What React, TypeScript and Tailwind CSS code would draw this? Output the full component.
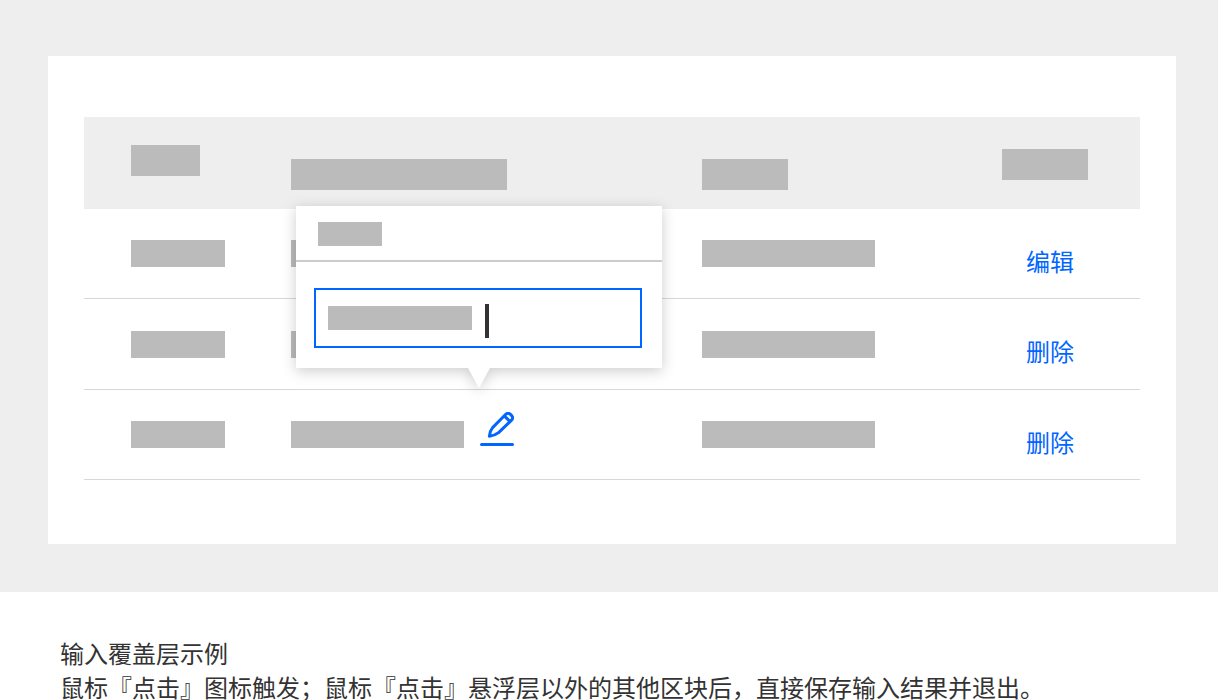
import type { ReactNode } from 'react';

function Bar({ className }: { className: string }) {
  return <div className={`shrink-0 bg-[#bbbbbb] ${className}`} />;
}

function ActionLink({ children }: { children: ReactNode }) {
  return (
    <a href="#" className="block pl-6 pt-[14px] text-2xl text-[#0066ff]">
      {children}
    </a>
  );
}

function EditPopover() {
  return (
    <div
      role="dialog"
      aria-label="输入覆盖层"
      className="absolute -left-[184px] bottom-full mb-11 w-[366px] drop-shadow-[0_3px_7px_rgba(0,0,0,0.2)]"
    >
      <div className="bg-white pb-5">
        <div className="border-b-2 border-[#cccccc] px-[22px] pb-[14px] pt-4">
          <Bar className="h-6 w-16" />
        </div>
        <div className="pl-[18px] pr-5 pt-[26px]">
          <label className="flex h-[60px] items-center border-2 border-[#0066ff] pl-3">
            <Bar className="h-6 w-36" />
            <span className="ml-[13px] mt-1.5 h-[34px] w-1 shrink-0 bg-[#333333]" />
            <input type="text" aria-label="输入内容" className="h-full min-w-0 flex-1 outline-none" />
          </label>
        </div>
      </div>
      <svg className="absolute left-1/2 top-full -ml-[11px]" width="22" height="20" viewBox="0 0 22 20" aria-hidden="true">
        <path d="M0 0H22L11 20Z" fill="#fff" />
      </svg>
    </div>
  );
}

function EditButton() {
  return (
    <div className="mb-3">
      <button type="button" aria-label="编辑" className="block text-[#0066ff]">
        <svg width="34" height="34" viewBox="0 0 34 34" fill="none" stroke="currentColor" aria-hidden="true">
          <path
            d="M9.4 24.2 C9.6 21.2 10.6 18 12.6 15.6 L25.8 2.3 Q28.2 .4 30.2 2.1 L31.7 3.6 Q33.5 5.8 31.6 8.1 L18.6 20.6 C16 22.6 12.8 23.8 9.4 24.2Z"
            strokeWidth="3"
            strokeLinejoin="round"
          />
          <path d="M24.2 3.8 30.2 9.6" strokeWidth="3" />
          <path d="M1.5 32.4H32.5" strokeWidth="3" strokeLinecap="round" />
        </svg>
      </button>
    </div>
  );
}

const rows = [
  { action: '编辑', height: 'h-[90px]' },
  { action: '删除', height: 'h-[91px]' },
  { action: '删除', height: 'h-[90px]', editing: true },
];

const cell = 'border-b border-[#d8d8d8] p-0 pl-[47px] align-middle';
const head = 'p-0 pl-[47px] align-top';

export default function App() {
  return (
    <main className="min-h-screen bg-white font-['Noto_Sans_CJK_SC',sans-serif] text-[#333333]">
      <section className="bg-[#eeeeee] pb-12 pl-12 pr-[42px] pt-14">
        <div className="bg-white px-9 pb-16 pt-[61px]">
          <table className="w-full table-fixed border-separate border-spacing-0">
            <colgroup>
              <col className="w-[160px]" />
              <col className="w-[411px]" />
              <col className="w-[300px]" />
              <col className="w-[185px]" />
            </colgroup>
            <thead>
              <tr className="h-[92px] bg-[#eeeeee]">
                <th className={`${head} pt-7`}>
                  <Bar className="h-[31px] w-[69px]" />
                </th>
                <th className={`${head} pt-[42px]`}>
                  <Bar className="h-[31px] w-[216px]" />
                </th>
                <th className={`${head} pt-[42px]`}>
                  <Bar className="h-[31px] w-[86px]" />
                </th>
                <th className={`${head} pt-8`}>
                  <Bar className="h-[31px] w-[86px]" />
                </th>
              </tr>
            </thead>
            <tbody>
              {rows.map((row, i) => (
                <tr key={i} className={row.height}>
                  <td className={cell}>
                    <Bar className="h-[27px] w-[94px]" />
                  </td>
                  <td className={cell}>
                    <div className="flex items-center gap-4">
                      <Bar className="h-[27px] w-[173px]" />
                      {row.editing && (
                        <div className="relative">
                          <EditButton />
                          <EditPopover />
                        </div>
                      )}
                    </div>
                  </td>
                  <td className={cell}>
                    <Bar className="h-[27px] w-[173px]" />
                  </td>
                  <td className={cell}>
                    <ActionLink>{row.action}</ActionLink>
                  </td>
                </tr>
              ))}
            </tbody>
          </table>
        </div>
      </section>
      <section className="px-[60px] pt-11 text-2xl leading-[34px]">
        <p>输入覆盖层示例</p>
        <p>鼠标『点击』图标触发；鼠标『点击』悬浮层以外的其他区块后，直接保存输入结果并退出。</p>
      </section>
    </main>
  );
}
